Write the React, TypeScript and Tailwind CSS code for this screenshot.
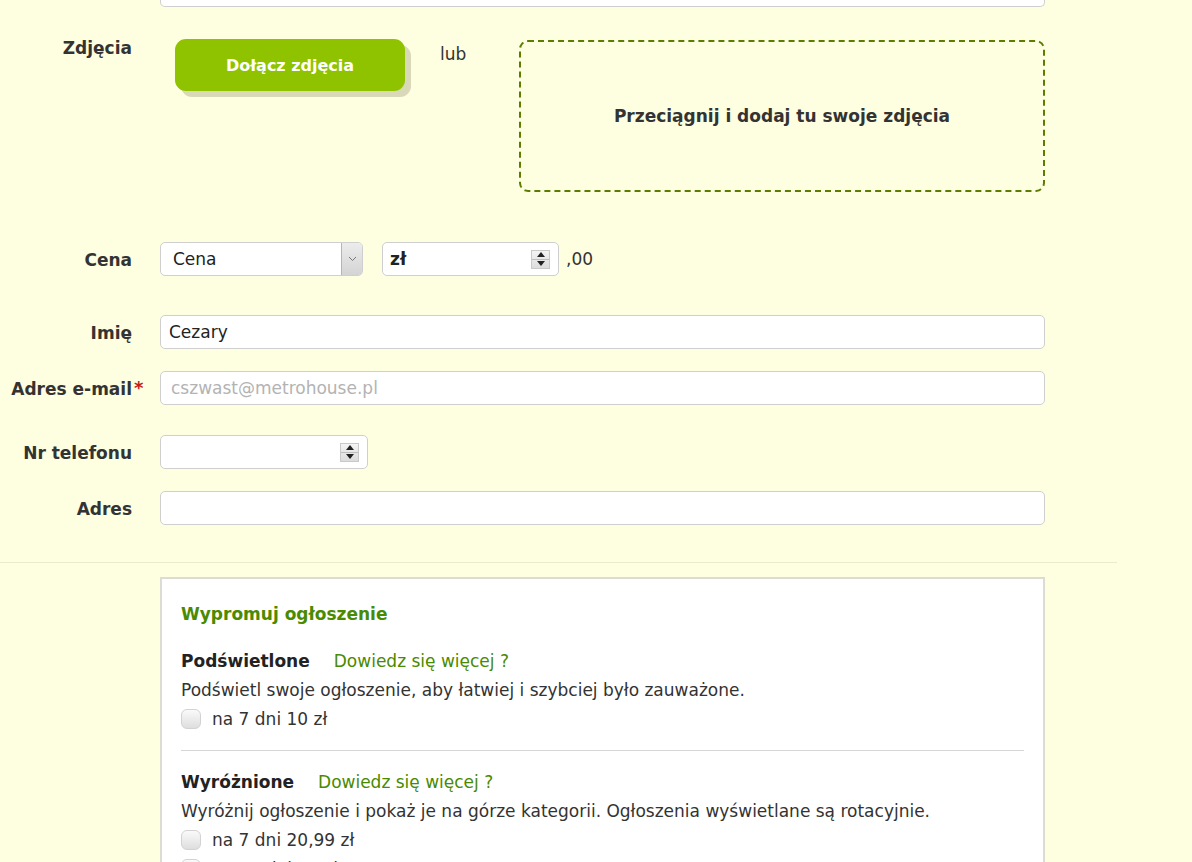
import React from 'react';

const font = "font-['Tahoma','DejaVu_Sans',sans-serif]";

const Spinner: React.FC = () => (
  <div className="flex flex-col w-[19px] h-[19px] border border-[#c9c9c9] bg-gradient-to-b from-[#f4f4f4] to-[#dcdcdc]">
    <div className="flex-1 flex items-center justify-center border-b border-[#bdbdbd]">
      <svg width="8" height="5" viewBox="0 0 8 5"><path d="M0 5 L4 0 L8 5 Z" fill="#222" /></svg>
    </div>
    <div className="flex-1 flex items-center justify-center">
      <svg width="8" height="5" viewBox="0 0 8 5"><path d="M0 0 L4 5 L8 0 Z" fill="#222" /></svg>
    </div>
  </div>
);

const Label: React.FC<{ text: string; required?: boolean }> = ({ text, required }) => (
  <div className="h-[34px] flex justify-end items-center pt-[3px]">
    <span className="font-bold text-[17px] text-[#333]">{text}</span>
    <span className="w-[13px] text-[#c0201b] font-bold text-[18px] leading-none pl-[2px] -mt-[4px]">{required ? '*' : ''}</span>
  </div>
);

const TextBox: React.FC<{ value?: string; placeholder?: string; className?: string }> = ({ value, placeholder, className }) => (
  <div className={`h-[34px] bg-white border border-[#cfcfcf] rounded-[5px] flex items-center pt-[2px] px-[8px] text-[17px] ${className ?? 'w-[885px]'}`}>
    {value ? <span className="text-[#222]">{value}</span> : <span className="text-[#b3b3b3]">{placeholder}</span>}
  </div>
);

const Checkbox: React.FC<{ label: string }> = ({ label }) => (
  <div className="h-[29px] flex items-center gap-[11px]">
    <span className="w-[20px] h-[20px] rounded-[6px] border border-[#d2d2d2] bg-gradient-to-b from-[#fafafa] to-[#dedede]" />
    <span className="pt-[2px]">{label}</span>
  </div>
);

const PromoSection: React.FC<{ title: string; desc: string; options: string[] }> = ({ title, desc, options }) => (
  <div>
    <div className="h-[29px] flex items-center gap-[24px] pt-[2px]">
      <span className="font-bold text-[#222]">{title}</span>
      <span className="text-[#4a8a00]">Dowiedz się więcej ?</span>
    </div>
    <div className="h-[29px] flex items-center pt-[2px]">{desc}</div>
    {options.map((o) => (
      <Checkbox key={o} label={o} />
    ))}
  </div>
);

export default function App() {
  return (
    <div className={`w-[1192px] h-[862px] overflow-hidden bg-[#fefee0] text-[#222] ${font}`}>
      {/* bottom of the previous input */}
      <div className="ml-[160px] w-[885px] h-[7px] bg-white border border-t-0 border-[#cfcfcf] rounded-b-[5px]" />

      <div className="grid grid-cols-[145px_885px] gap-x-[15px] mt-[32px]">
        {/* Zdjęcia */}
        <div className="flex justify-end items-start">
          <span className="font-bold text-[17px] text-[#333] leading-[18px]">Zdjęcia</span>
          <span className="w-[13px]" />
        </div>
        <div className="flex items-start h-[152px]">
          <button className="ml-[15px] w-[230px] h-[52px] shrink-0 rounded-[11px] bg-[#8fc300] text-white font-bold text-[16px] pt-[1px] shadow-[6px_6px_0_#d9d9b9]">
            Dołącz zdjęcia
          </button>
          <div className="w-[114px] shrink-0 pl-[35px] pt-[3px] text-[17px] text-[#333]">lub</div>
          <div className="mt-[1px] w-[526px] h-[152px] shrink-0 border-2 border-dashed border-[#5b7d00] rounded-[9px] flex items-center justify-center">
            <span className="font-bold text-[17px] text-[#333] pt-[2px]">Przeciągnij i dodaj tu swoje zdjęcia</span>
          </div>
        </div>

        {/* Cena */}
        <div className="mt-[51px]"><Label text="Cena" /></div>
        <div className="mt-[51px] flex items-center h-[34px]">
          <div className="w-[203px] h-[34px] bg-white border border-[#cfcfcf] rounded-[5px] flex items-stretch text-[17px] overflow-hidden">
            <span className="flex-1 flex items-center pl-[12px] pt-[2px]">Cena</span>
            <span className="w-[21px] border-l border-[#b5b5b5] bg-gradient-to-b from-[#ececec] to-[#d4d4d4] flex items-center justify-center">
              <svg width="9" height="6" viewBox="0 0 9 6"><path d="M1 1 L4.5 4.5 L8 1" stroke="#777" strokeWidth="1" fill="none" /></svg>
            </span>
          </div>
          <div className="ml-[19px] w-[177px] h-[34px] bg-white border border-[#cfcfcf] rounded-[5px] flex items-center justify-between pl-[7px] pr-[8px] text-[17px]">
            <span className="font-bold pt-[2px]">zł</span>
            <Spinner />
          </div>
          <span className="ml-[7px] text-[17px] text-[#333] pt-[2px]">,00</span>
        </div>

        {/* Imię */}
        <div className="mt-[39px]"><Label text="Imię" /></div>
        <div className="mt-[39px]"><TextBox value="Cezary" /></div>

        {/* Email */}
        <div className="mt-[22px]"><Label text="Adres e-mail" required /></div>
        <div className="mt-[22px]"><TextBox placeholder="cszwast@metrohouse.pl" className="w-[885px] pl-[10px]" /></div>

        {/* Telefon */}
        <div className="mt-[30px]"><Label text="Nr telefonu" /></div>
        <div className="mt-[30px]">
          <div className="w-[208px] h-[34px] bg-white border border-[#cfcfcf] rounded-[5px] flex items-center justify-end pr-[8px]">
            <Spinner />
          </div>
        </div>

        {/* Adres */}
        <div className="mt-[22px]"><Label text="Adres" /></div>
        <div className="mt-[22px]"><TextBox /></div>
      </div>

      <div className="mt-[37px] w-[1117px] h-[1px] bg-[#ebeacb]" />

      <div className="ml-[160px] mt-[14px] w-[885px] bg-white border-2 border-[#dcdcd4] px-[19px] pt-[20px] pb-[20px] text-[17px] text-[#333]">
        <div className="h-[29px] flex items-center pt-[2px] font-bold text-[#4a8a00] text-[17px]">Wypromuj ogłoszenie</div>
        <div className="mt-[18px]">
          <PromoSection
            title="Podświetlone"
            desc="Podświetl swoje ogłoszenie, aby łatwiej i szybciej było zauważone."
            options={['na 7 dni 10 zł']}
          />
        </div>
        <div className="mt-[17px] h-[1px] bg-[#d6d6d6]" />
        <div className="mt-[16px]">
          <PromoSection
            title="Wyróżnione"
            desc="Wyróżnij ogłoszenie i pokaż je na górze kategorii. Ogłoszenia wyświetlane są rotacyjnie."
            options={['na 7 dni 20,99 zł', 'na 15 dni 15 zł']}
          />
        </div>
      </div>
    </div>
  );
}
